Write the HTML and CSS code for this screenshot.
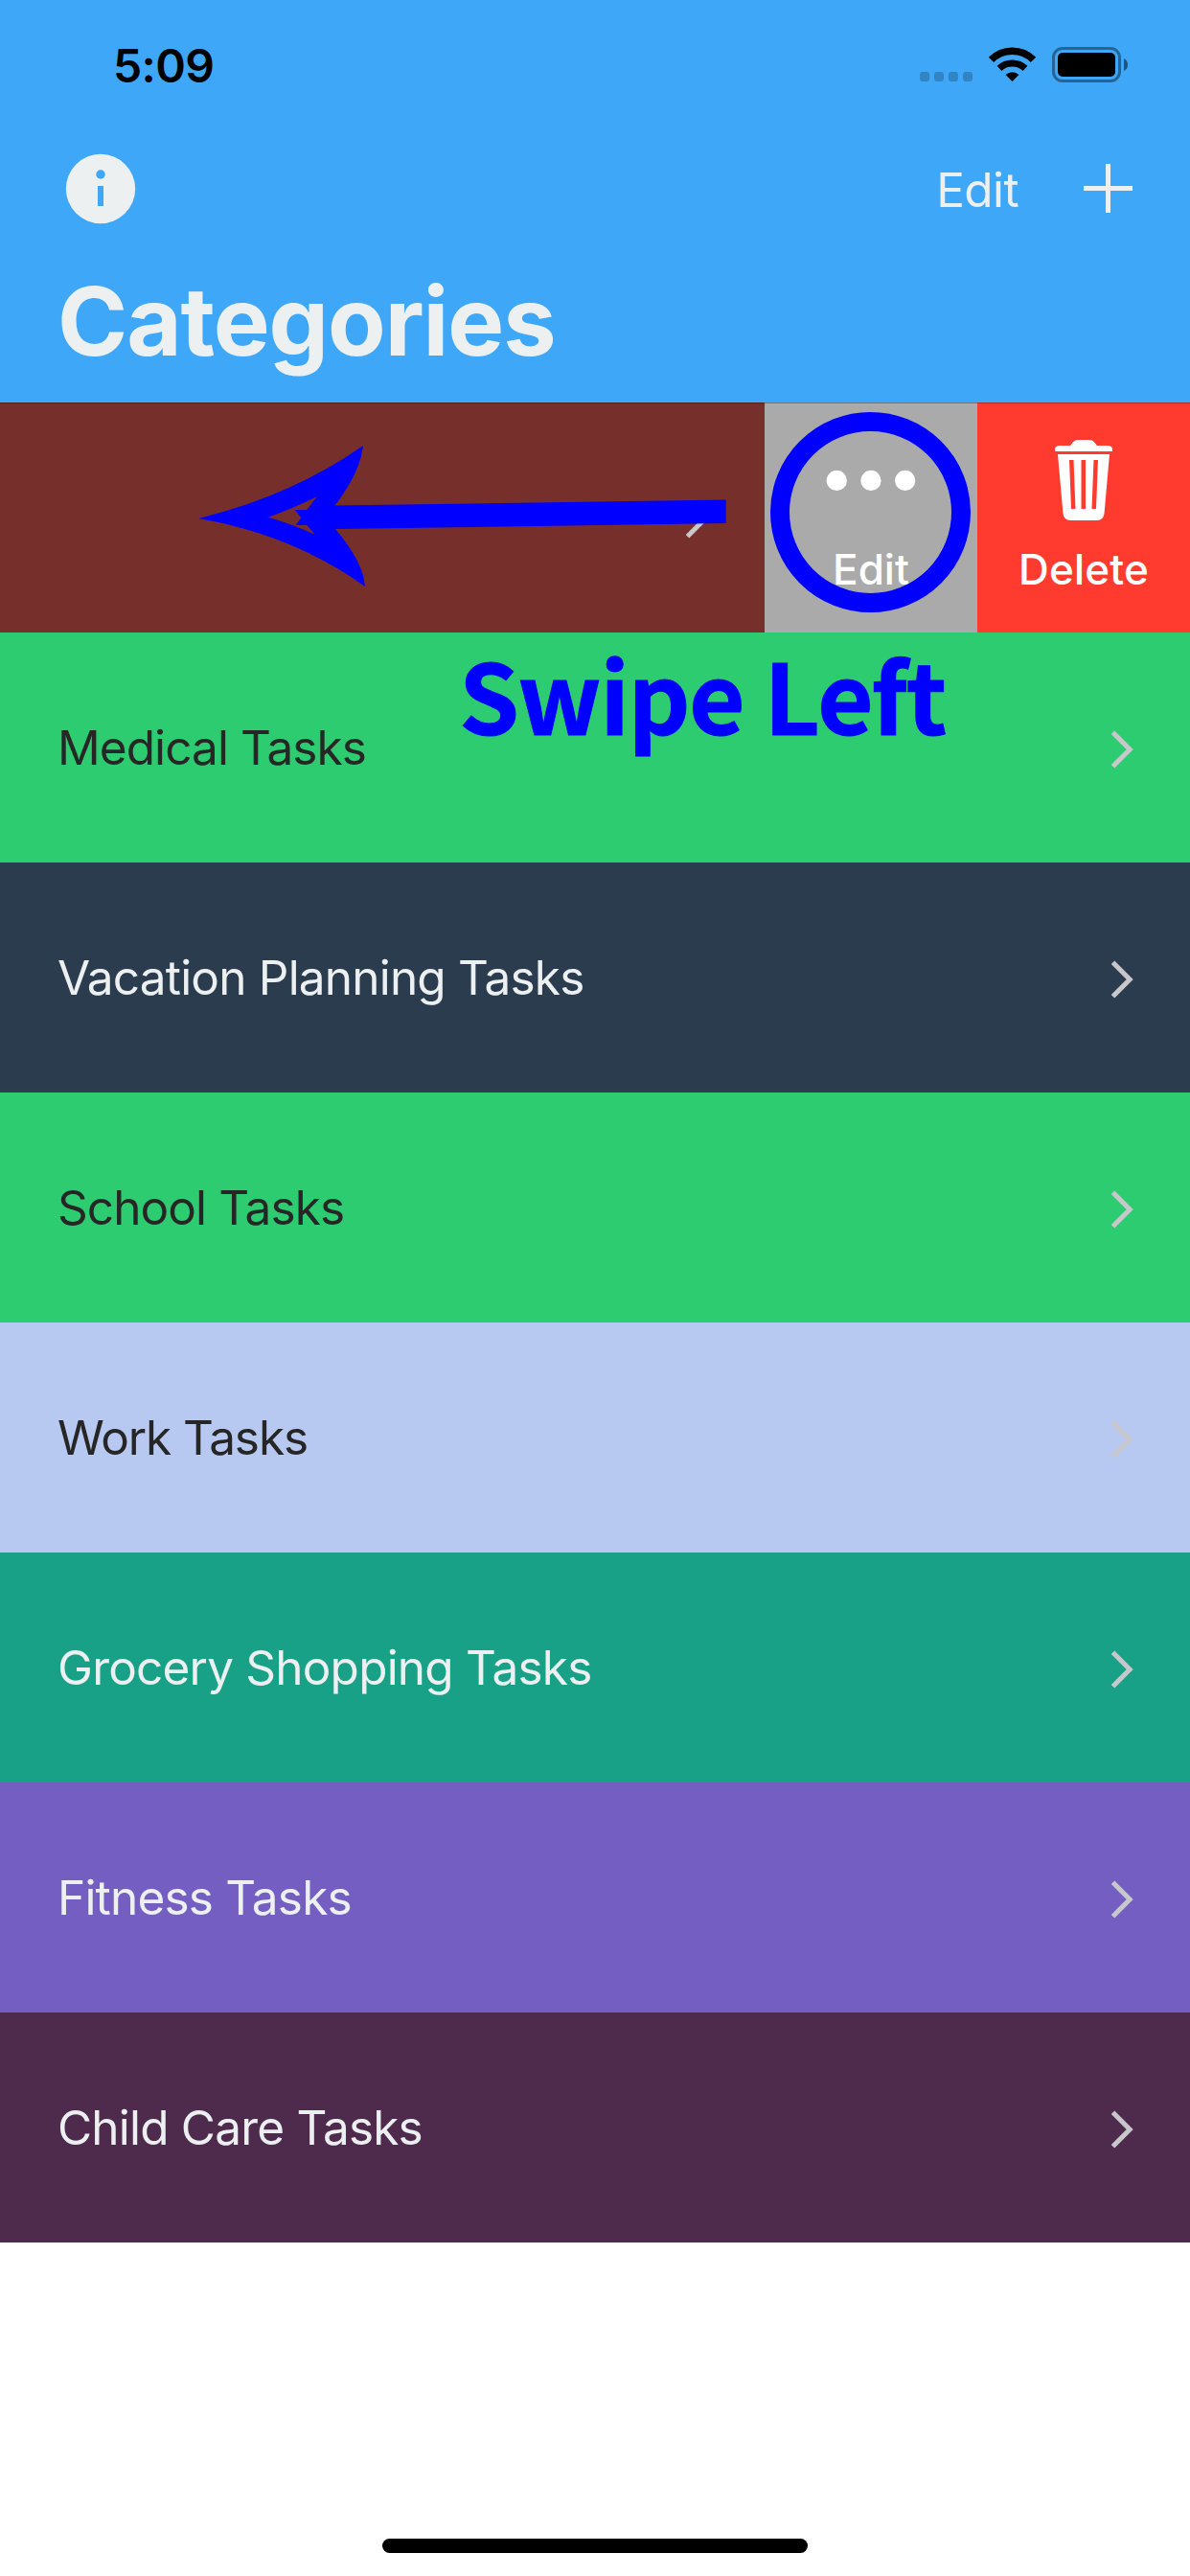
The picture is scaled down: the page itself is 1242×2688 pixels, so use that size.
FILE: index.html
```
<!DOCTYPE html>
<html lang="en">
<head>
<meta charset="utf-8">
<title>Categories</title>
<link rel="stylesheet" href="styles.css">
</head>
<body>
<svg width="0" height="0" class="defs" aria-hidden="true">
  <symbol id="chevron" viewBox="0 0 24 40">
    <path d="M2.5 2.3 20.2 20 2.5 37.7" fill="none" stroke="#c7c7cc" stroke-width="5"/>
  </symbol>
</svg>
<div class="screen">
  <header class="header">
    <div class="status">
      <span class="time">5:09</span>
      <svg class="status-icons" width="217" height="37" viewBox="960 49 217 37">
        <g fill="#000" fill-opacity=".2">
          <rect x="960" y="75" width="10" height="10" rx="3"/>
          <rect x="975" y="75" width="10" height="10" rx="3"/>
          <rect x="990" y="75" width="10" height="10" rx="3"/>
          <rect x="1005" y="75" width="10" height="10" rx="3"/>
        </g>
        <path d="M1034.5 62.4A31 31 0 0 1 1078.5 62.4" fill="none" stroke="#000" stroke-width="7.6"/>
        <path d="M1043 71.4A19.5 19.5 0 0 1 1070 71.4" fill="none" stroke="#000" stroke-width="7"/>
        <path d="M1049.6 78A10 10 0 0 1 1063.4 78L1056.5 85Z"/>
        <rect x="1099.5" y="50.5" width="69" height="34" rx="9.5" fill="none" stroke="#000" stroke-opacity=".4" stroke-width="3"/>
        <rect x="1104" y="55" width="60" height="25" rx="5"/>
        <path d="M1173 61Q1177 63 1177 67.5T1173 74Z" fill-opacity=".5"/>
      </svg>
    </div>
    <nav class="nav">
      <svg class="info" width="74" height="74" viewBox="0 0 74 74">
        <circle cx="37" cy="37" r="36.2" fill="#ecf0f1"/>
        <circle cx="37" cy="22" r="4.7" fill="#3ea7f7"/>
        <rect x="34" y="34" width="6" height="21" fill="#3ea7f7"/>
      </svg>
      <span class="nav-edit">Edit</span>
      <svg class="plus" width="51" height="51" viewBox="0 0 51 51">
        <path d="M23 0h5v23h23v5H28v23h-5V28H0v-5h23z" fill="#ecf0f1"/>
      </svg>
    </nav>
    <h1 class="title">Categories</h1>
  </header>

  <main class="list">
    <div class="swiped">
      <div class="row row-maroon"><svg class="chevron"><use href="#chevron"/></svg></div>
      <div class="action action-edit">
        <svg width="94" height="84" viewBox="0 0 94 84" fill="#fff">
          <circle cx="11.3" cy="42.4" r="10.6"/><circle cx="47" cy="42.4" r="10.6"/><circle cx="82.7" cy="42.4" r="10.6"/>
        </svg>
        <span>Edit</span>
      </div>
      <div class="action action-delete">
        <svg width="60" height="84" viewBox="0 0 60 84">
          <path fill="#fff" d="M0 12V10Q0 6 5 6H16L19 2.300Q21 0 24 0H36Q39 0 41 2.300L44 6H55Q60 6 60 10V12Z"/>
          <path fill="#fff" fill-rule="evenodd" d="M3 15H57L51.500 77Q50.500 84 44 84H16Q9.500 84 8.500 77ZM15 21 17 72H21.500L19.500 21ZM27.500 21V72H32V21ZM40.500 21 38.500 72H43L45 21Z"/>
        </svg>
        <span>Delete</span>
      </div>
    </div>
    <div class="row row-green"><span>Medical Tasks</span><svg class="chevron"><use href="#chevron"/></svg></div>
    <div class="row row-navy"><span>Vacation Planning Tasks</span><svg class="chevron"><use href="#chevron"/></svg></div>
    <div class="row row-green"><span>School Tasks</span><svg class="chevron"><use href="#chevron"/></svg></div>
    <div class="row row-powder"><span>Work Tasks</span><svg class="chevron"><use href="#chevron"/></svg></div>
    <div class="row row-mint"><span>Grocery Shopping Tasks</span><svg class="chevron"><use href="#chevron"/></svg></div>
    <div class="row row-purple"><span>Fitness Tasks</span><svg class="chevron"><use href="#chevron"/></svg></div>
    <div class="row row-plum"><span>Child Care Tasks</span><svg class="chevron"><use href="#chevron"/></svg></div>
  </main>

  <footer class="footer"><div class="home-bar"></div></footer>

  <svg class="marks" width="1242" height="240" viewBox="0 420 1242 240">
    <path fill="#00f" fill-rule="evenodd" d="M207.500 541Q305 517 379 465Q376 493 349.500 527.500L757.700 521.500V546L350 552Q379 586 381 612Q306 558 207.500 541ZM280 539.700Q305 531 330.700 518.300L320.300 532H307.700L314.300 540.300 308.700 548H320.300L328.700 557.700Q305 547 280 539.700Z"/>
    <circle cx="908.5" cy="534.5" r="94.500" fill="none" stroke="#00f" stroke-width="20"/>
  </svg>
  <div class="swipe-label">Swipe Left</div>
</div>
</body>
</html>
```
FILE: styles.css
```
* { box-sizing: border-box; }

body {
  margin: 0;
  background: #fff;
  font-family: Inter, "Liberation Sans", sans-serif;
}

svg { display: block; flex: none; }
.defs { position: absolute; }

.screen {
  position: relative;
  display: flex;
  flex-direction: column;
  width: 1242px;
  height: 2688px;
  overflow: hidden;
}

.header {
  height: 420px;
  background: #3ea7f7;
  color: #ecf0f1;
}

.status {
  display: flex;
  align-items: center;
  justify-content: space-between;
  height: 135px;
  padding: 0 65px 0 118px;
}

.time {
  padding-top: 1px;
  color: #000;
  font-size: 48px;
  font-weight: 600;
  letter-spacing: -0.6px;
}

.nav {
  display: flex;
  align-items: center;
  height: 123px;
  padding: 0 60px 0 68px;
}

.nav-edit {
  margin-left: auto;
  margin-right: 68px;
  padding-top: 2px;
  font-size: 49.5px;
  letter-spacing: -0.6px;
}

.title {
  margin: 17px 0 0 60px;
  font-size: 99px;
  font-weight: 700;
  line-height: 120px;
  letter-spacing: -1.1px;
}

.row {
  display: flex;
  align-items: center;
  justify-content: space-between;
  height: 240px;
  padding: 3px 59px 0 60px;
  color: #ecf0f1;
  font-size: 49.5px;
  letter-spacing: -0.8px;
}

.row span { padding-bottom: 3px; }

.chevron { width: 24px; height: 40px; }

.row-green { background: #2ecc71; color: #262626; letter-spacing: -0.92px; }
.row-navy { background: #2c3c4f; }
.row-powder { background: #b8c9f1; color: #262626; letter-spacing: -1.1px; }
.row-mint { background: #18a186; }
.row-purple { background: #755ec2; }
.row-plum { background: #4e2b4d; }
.row-maroon { flex: 1; justify-content: flex-end; background: #762f2a; }

.swiped {
  display: flex;
  height: 240px;
}

.swiped > * { box-shadow: inset 0 1px rgba(0, 0, 0, 0.3); }

.action {
  display: flex;
  flex-direction: column;
  align-items: center;
  width: 222px;
  height: 240px;
  padding-top: 39px;
  color: #fff;
  font-size: 44px;
  font-weight: 500;
}

.action span { margin-top: 21px; line-height: 60px; }
.action-edit { background: #aaa; }
.action-delete { background: #ff3b30; letter-spacing: 0.2px; }

.footer {
  display: flex;
  flex: 1;
  align-items: flex-end;
  justify-content: center;
  padding-bottom: 24px;
}

.home-bar {
  width: 444px;
  height: 15px;
  border-radius: 8px;
  background: #000;
}

.marks {
  position: absolute;
  top: 420px;
  left: 0;
}

.swipe-label {
  position: absolute;
  top: 673px;
  left: 479px;
  color: #00f;
  font: 700 101px/100px "Noto Sans CJK SC", sans-serif;
  letter-spacing: -1.5px;
  -webkit-text-stroke: 1px #00f;
  white-space: nowrap;
}
```
